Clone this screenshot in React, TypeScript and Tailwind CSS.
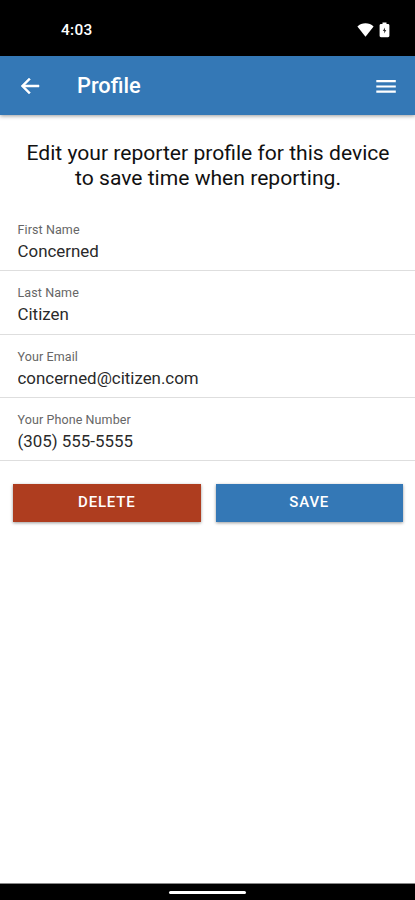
const fields = [
  { id: 'firstName', label: 'First Name', value: 'Concerned' },
  { id: 'lastName', label: 'Last Name', value: 'Citizen' },
  { id: 'email', label: 'Your Email', value: 'concerned@citizen.com' },
  { id: 'phone', label: 'Your Phone Number', value: '(305) 555-5555' },
];

function StatusBar() {
  return (
    <div className="h-[56px] shrink-0 bg-black text-white flex items-center justify-between pl-[61px] pr-[25px] pt-[5px]">
      <span className="pt-[1px] text-[15.4px] leading-none font-medium tracking-[0.3px]">4:03</span>
      <div className="flex items-center gap-[5px] pb-[2px]">
        <svg width="17" height="14" viewBox="0 0 17 14" fill="currentColor">
          <path d="M8.5 13.8 0.4 3.6C2.6 1.4 5.4.3 8.5.3s5.9 1.1 8.1 3.3z" />
        </svg>
        <svg width="11" height="16" viewBox="0 0 11 16">
          <path
            fill="currentColor"
            d="M3.5 0.5h4v1.5h1.5c.8 0 1.4.6 1.4 1.4v10.4c0 .8-.6 1.4-1.4 1.4H2c-.8 0-1.4-.6-1.4-1.4V3.4C.6 2.6 1.2 2 2 2h1.5z"
          />
          <path fill="#333" d="M6 5.5 3.8 9H5.2v2.5L7.3 8H6z" />
        </svg>
      </div>
    </div>
  );
}

function Header() {
  return (
    <header className="relative h-[59px] shrink-0 bg-[#3478b6] text-white flex items-center px-[18px] shadow-[0_1px_4px_rgba(0,0,0,0.4)]">
      <button aria-label="Back">
        <svg width="24" height="24" viewBox="0 0 24 24" fill="currentColor" stroke="currentColor" strokeWidth="0.5">
          <path d="M21 11H6.83l5.58-5.59L11 4l-8 8 8 8 1.41-1.41L6.83 13H21z" />
        </svg>
      </button>
      <h1 className="ml-[35px] flex-1 pt-[1px] text-[21.8px] leading-[32px] font-medium">Profile</h1>
      <button aria-label="Menu" className="-mr-[1px]">
        <svg width="24" height="24" viewBox="0 0 24 24" fill="currentColor">
          <path d="M2.3 6.1h19.5v2.2H2.3zM2.3 11.4h19.5v2.2H2.3zM2.3 16.6h19.5v2.2H2.3z" />
        </svg>
      </button>
    </header>
  );
}

export default function App() {
  return (
    <div className="h-[900px] w-full flex flex-col bg-white font-[Roboto,sans-serif] text-[#2a2a2a]">
      <StatusBar />
      <Header />
      <main className="flex-1">
        <p className="pt-[25px] pl-[1px] text-center text-[21.1px] leading-[25px] text-[#111]">
          Edit your reporter profile for this device
          <br />
          to save time when reporting.
        </p>
        <form className="mt-[18px]">
          {fields.map((field) => (
            <div key={field.id} className="h-[63.33px] border-b border-[#dedede] pl-[17.5px] pt-[13px]">
              <label htmlFor={field.id} className="block text-[12.5px] leading-[17px] tracking-[0.1px] text-[#666]">
                {field.label}
              </label>
              <input
                id={field.id}
                defaultValue={field.value}
                className="block w-full text-[16.9px] leading-[26px] outline-none"
              />
            </div>
          ))}
          <div className="mt-[23px] flex gap-[15px] pl-[13px] pr-[12px]">
            <button
              type="button"
              className="h-[38px] flex-1 pb-[2px] bg-[#ae3d1f] text-white text-[15px] font-medium tracking-[0.8px] shadow-[0_1px_3px_rgba(0,0,0,0.4)]"
            >
              DELETE
            </button>
            <button
              type="button"
              className="h-[38px] flex-1 pb-[2px] bg-[#3478b6] text-white text-[15px] font-medium tracking-[0.8px] shadow-[0_1px_3px_rgba(0,0,0,0.4)]"
            >
              SAVE
            </button>
          </div>
        </form>
      </main>
      <div className="h-[17px] shrink-0 border-t border-[#888] bg-black flex justify-center pt-[7px]">
        <div className="h-[3px] w-[77px] rounded-full bg-white" />
      </div>
    </div>
  );
}
